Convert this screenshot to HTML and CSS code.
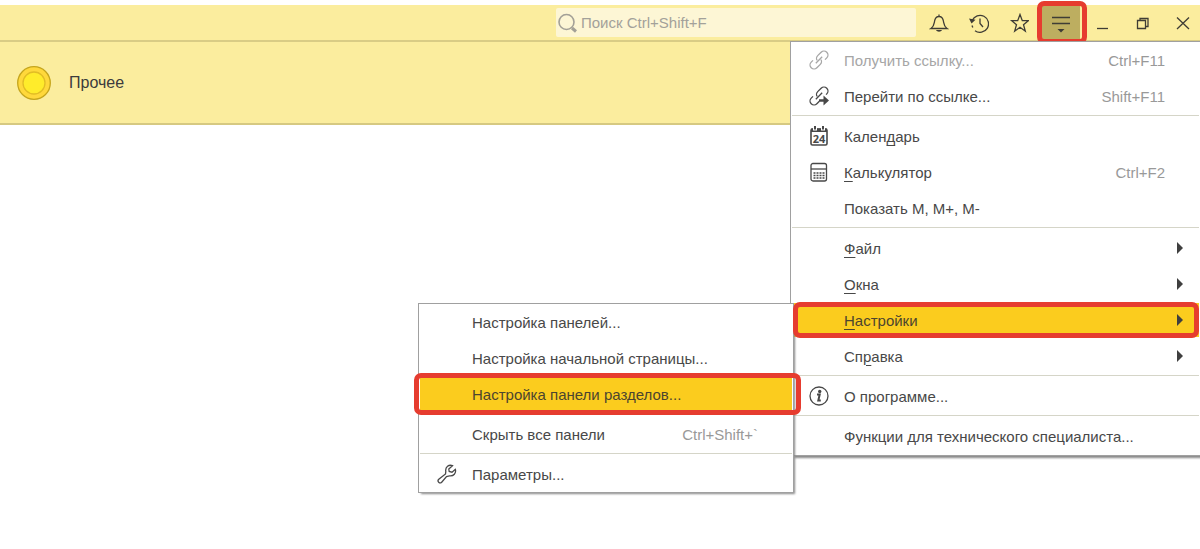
FILE: index.html
```
<!DOCTYPE html>
<html lang="ru">
<head>
<meta charset="utf-8">
<title>Прочее</title>
<link rel="stylesheet" href="styles.css">
</head>
<body>
<div class="app">
  <header class="titlebar">
    <label class="search">
      <svg class="search-icon" width="20" height="20" viewBox="0 0 20 20"><circle cx="8.500" cy="9" r="7.500"/><path class="handle" d="M14 15l4 3.500"/></svg>
      <input class="search-input" type="text" placeholder="Поиск Ctrl+Shift+F" aria-label="Поиск">
    </label>
    <button class="tool" aria-label="Уведомления">
      <svg width="20" height="20" viewBox="0 0 20 20"><path d="M2 15.500h16c-3-2-3-4-3.500-7C14 5 12.500 3.500 10 3.500S6 5 5.500 8.500C5 11.500 5 13.500 2 15.500zM10 3.500V1.500"/><path class="solid" d="M7 17h6c-1 2.300-5 2.300-6 0z"/></svg>
    </button>
    <button class="tool" aria-label="История">
      <svg width="20" height="20" viewBox="0 0 20 20"><path d="M3.200 7.500A8.500 8.500 0 1 1 6 17.700"/><path d="M3 12.500l.8 2"/><path d="M11 5.500v5l3 3.500"/><path class="solid" d="M0 5.500l6.500 1.200L2.500 10.500z"/></svg>
    </button>
    <button class="tool" aria-label="Избранное">
      <svg width="20" height="20" viewBox="0 0 20 20"><path d="M11 1.500l2.300 6.200h6l-4.800 4 1.800 6.500-5.300-3.900-5.300 3.900 1.800-6.500-4.800-4h6z"/></svg>
    </button>
    <button class="tool tool-menu" aria-label="Главное меню" aria-expanded="true">
      <svg width="20" height="20" viewBox="0 0 20 20"><path d="M1 4.500h18M1 10.500h18"/><path class="solid" d="M6.500 16h7L10 19.500z"/></svg>
      <span class="mark mark-tool"></span>
    </button>
    <button class="tool" aria-label="Свернуть">
      <svg width="20" height="20" viewBox="0 0 20 20"><path d="M4 15.500h11"/></svg>
    </button>
    <button class="tool" aria-label="Восстановить">
      <svg width="20" height="20" viewBox="0 0 20 20"><path d="M4.500 7.500h8v8h-8zM7 7V5.500h8v8h-2"/></svg>
    </button>
    <button class="tool" aria-label="Закрыть">
      <svg width="20" height="20" viewBox="0 0 20 20"><path d="M4 4.500l12 11.500M16 4.500L4 16"/></svg>
    </button>
  </header>

  <nav class="sections">
    <a class="section" href="#">
      <svg width="34" height="34" viewBox="0 0 34 34"><circle class="coin" cx="17" cy="17" r="16.300"/><circle class="coin-core" cx="17" cy="17" r="11"/></svg>
      <span>Прочее</span>
    </a>
  </nav>

  <main class="workspace"></main>

  <div class="menu main-menu">
    <button class="item" disabled>
      <svg class="icon" width="20" height="20" viewBox="0 0 20 20"><g transform="translate(10 10) rotate(-45)"><path d="M4.500 4H7a4 4 0 0 0 0-8H2.500C0-4-1.500-2.500-1.500-1M-4.500-4H-7a4 4 0 0 0 0 8h4.500C0 4 1.500 2.500 1.500 1M-4.500 0h9"/></g></svg>
      <span class="label">Получить ссылку...</span><span class="keys">Ctrl+F11</span>
    </button>
    <button class="item">
      <svg class="icon" width="20" height="20" viewBox="0 0 20 20"><g transform="translate(10 10) rotate(-45)"><path d="M6 4H7a4 4 0 0 0 0-8H2.500C0-4-1.500-2.500-1.500-1M-4.500-4H-7a4 4 0 0 0 0 8h3.500M-4.500 0h9"/></g><path class="arrow" d="M10 14.500h6"/><path class="solid" d="M14.500 9.500l5.500 5-5.500 5z"/></svg>
      <span class="label">Перейти по ссылке...</span><span class="keys">Shift+F11</span>
    </button>
    <hr class="line">
    <button class="item">
      <svg class="icon" width="20" height="20" viewBox="0 0 20 20"><rect class="sheet" x="2" y="3" width="16" height="16" rx="1.500"/><path class="solid" d="M2 2.500h16v3.500H2z"/><path class="gap" d="M6 2v2.500M14 2v2.500"/><path class="ring" d="M6 0v3.500M14 0v3.500"/><text class="day" x="10" y="16.500">24</text></svg>
      <span class="label">Кален<u>д</u>арь</span>
    </button>
    <button class="item">
      <svg class="icon" width="20" height="20" viewBox="0 0 20 20"><rect x="2" y="1.500" width="15.500" height="17.500" rx="2"/><path d="M2 7h15.500"/><path class="keysdots" d="M4.500 11h11M4.500 13.500h11M4.500 16h11"/></svg>
      <span class="label"><u>К</u>алькулятор</span><span class="keys">Ctrl+F2</span>
    </button>
    <button class="item"><span class="icon"></span><span class="label">Показать M, M+, M-</span></button>
    <hr class="line">
    <button class="item"><span class="icon"></span><span class="label"><u>Ф</u>айл</span><span class="more"></span></button>
    <button class="item"><span class="icon"></span><span class="label"><u>О</u>кна</span><span class="more"></span></button>
    <div class="branch">
      <button class="item active" aria-expanded="true"><span class="icon"></span><span class="label"><u>Н</u>астройки</span><span class="more"></span></button>
      <div class="menu submenu">
        <button class="item"><span class="icon"></span><span class="label">Настройка панелей...</span></button>
        <button class="item"><span class="icon"></span><span class="label">Настройка начальной страницы...</span></button>
        <button class="item active"><span class="icon"></span><span class="label">Настройка панели разделов...</span><span class="mark mark-sub"></span></button>
        <hr class="line">
        <button class="item"><span class="icon"></span><span class="label">Скрыть все панели</span><span class="keys">Ctrl+Shift+`</span></button>
        <hr class="line">
        <button class="item">
          <svg class="icon" width="20" height="20" viewBox="0 0 20 20"><path d="M15.500 1.700C12 .2 8 3 8.800 7.500L8.500 10l-7 5.500c-1.500 2 1 4.300 3 3L9.500 12.500l3-.7c4 .7 7-2.800 5.800-6.500L15 8.200l-2.800-.7-.4-2.500z"/></svg>
          <span class="label">Параметры...</span>
        </button>
      </div>
      <span class="mark mark-item"></span>
    </div>
    <button class="item"><span class="icon"></span><span class="label">Сп<u>р</u>авка</span><span class="more"></span></button>
    <hr class="line">
    <button class="item">
      <svg class="icon" width="20" height="20" viewBox="0 0 20 20"><circle cx="10" cy="10" r="9"/><circle class="solid" cx="10.700" cy="5.500" r="1.700"/><path class="stem" d="M8 8.500h2.700L9.300 14.500h2.500"/></svg>
      <span class="label">О программе...</span>
    </button>
    <hr class="line">
    <button class="item"><span class="icon"></span><span class="label">Функции для технического специалиста...</span></button>
  </div>
</div>
</body>
</html>
```
FILE: styles.css
```
* { box-sizing: border-box; }

body {
  margin: 0;
  background: #fff;
  color: #484848;
  font-family: "Liberation Sans", Arial, sans-serif;
  font-size: 15px;
}

button, input {
  margin: 0;
  padding: 0;
  border: 0;
  background: none;
  color: inherit;
  font: inherit;
}

svg {
  fill: none;
  stroke: currentColor;
  stroke-width: 1.3;
}

.solid { fill: currentColor; stroke: none; }

.app {
  position: relative;
  display: flex;
  flex-direction: column;
  min-height: 100vh;
  padding-top: 5px;
  overflow: hidden;
}

.titlebar {
  display: flex;
  justify-content: flex-end;
  align-items: center;
  gap: 6px;
  height: 37px;
  border-bottom: 2px solid #d9cc85;
  background: #fbed9e;
}

.search {
  display: flex;
  align-items: center;
  gap: 3px;
  width: 30%;
  height: 29px;
  padding-left: 2px;
  border-radius: 2px;
  background: #fdf6d5;
}

.search-icon { flex: none; color: #a3a097; stroke-width: 1.6; }
.search-icon .handle { stroke-width: 3; }
.search-input { flex: 1; min-width: 0; outline: 0; }
.search-input::placeholder { color: #a3a19a; opacity: 1; }

.tool {
  position: relative;
  display: flex;
  justify-content: center;
  align-items: center;
  width: 34px;
  height: 34px;
  color: #3f3d35;
}

.tool-menu { width: 38px; background: #bdae60; }

.sections {
  display: flex;
  align-items: center;
  height: 83px;
  padding: 0 17px;
  border-bottom: 2px solid #d6c981;
  background: #fbed9e;
}

.section {
  display: flex;
  align-items: center;
  gap: 18px;
  color: #3c3c3c;
  font-size: 16px;
  text-decoration: none;
}

.coin { fill: #ffd83b; stroke: #c5a51c; }
.coin-core { fill: #ffec2b; stroke: #e2bd25; }

.workspace { flex: 1; }

.menu {
  position: absolute;
  border: 1px solid #a0a0a0;
  background: #fff;
}

.main-menu {
  top: 41px;
  right: 0;
  width: 410px;
  padding-bottom: 1px;
  border-right: 0;
  box-shadow: 3px 3px 2px -1px #888;
}

.submenu {
  top: 1px;
  right: 100%;
  width: 376px;
  margin-right: -3px;
  box-shadow: 2px 2px 2px -1px #888;
}

.item {
  position: relative;
  display: flex;
  align-items: center;
  width: 100%;
  height: 36px;
  padding: 0 35px 0 18px;
  text-align: left;
  white-space: nowrap;
}

.item:disabled { color: #a6a6a6; }

.item u {
  text-decoration-thickness: 1px;
  text-underline-offset: 3px;
}

.icon { flex: none; width: 20px; margin-right: 15px; }
.label { flex: 1; }
.keys { color: #999; }

.more {
  width: 0;
  margin-right: -18px;
  border: 6px solid transparent;
  border-right: 0;
  border-left-color: #3f3f3f;
}

.active {
  border: 1px solid transparent;
  padding: 0 34px 0 17px;
  background: #fbcc1e;
  background-clip: padding-box;
  color: #4c452f;
}

.line {
  height: 1px;
  margin: 1px 1px 2px;
  border: 0;
  background: #d5d5c8;
}

.branch { position: relative; }

/* Red highlight frames */
.mark {
  position: absolute;
  border: 5px solid #e63c2f;
  border-radius: 7px;
  pointer-events: none;
}

.mark-tool { inset: -5px -7px -4px -5px; }
.mark-item { inset: 0 1px 0 2px; }
.mark-sub { inset: -4px -9px -4px -6px; }

.arrow { stroke-width: 2.5; }
.sheet { stroke-width: 1.6; }
.ring { stroke-width: 2; }
.gap { stroke: #fff; stroke-width: 4; }
.keysdots { stroke-width: 1.3; stroke-dasharray: 2 1; }
.stem { stroke-width: 2; }

.day {
  fill: currentColor;
  stroke: none;
  font-family: "Open Sans", "Noto Sans", sans-serif;
  font-size: 11px;
  font-weight: 700;
  text-anchor: middle;
}
```
